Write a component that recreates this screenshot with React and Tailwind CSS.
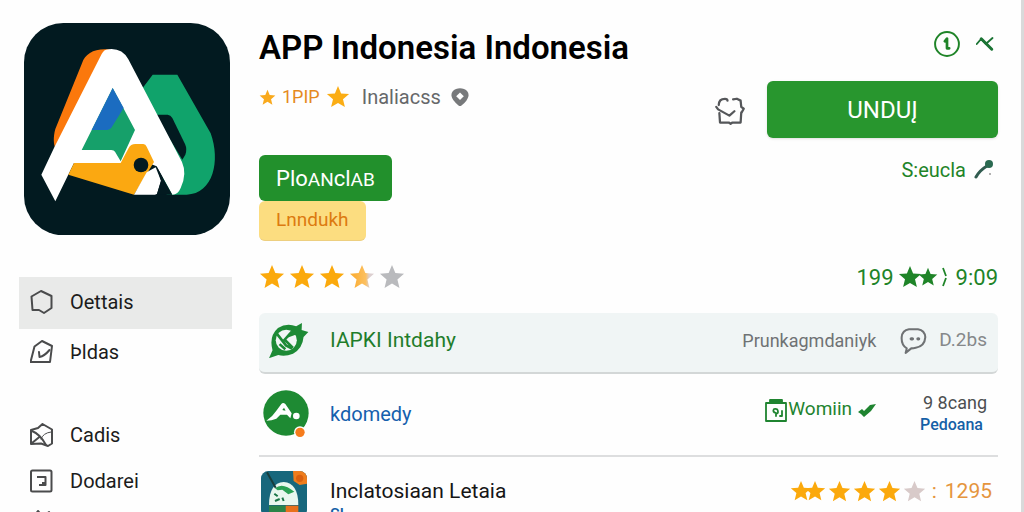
import React from "react";

const STAR = "M12 1l3.100 7.400 8 .7-6.100 5.200 1.900 7.800L12 18l-6.900 4.100 1.900-7.800L.9 9.100l8-.7z";

const Star = ({ className }) => (
  <svg viewBox="0 0 24 24" fill="currentColor" className={className} aria-hidden="true">
    <path d={STAR} />
  </svg>
);

// Star with only its left part filled
const HalfStar = ({ className }) => (
  <svg viewBox="0 0 24 24" className={className} aria-hidden="true">
    <defs>
      <linearGradient id="half">
        <stop offset="0.2" stopColor="#fbb03a" />
        <stop offset="0.65" stopColor="#fcc060" />
        <stop offset="0.8" stopColor="#dccfd0" />
      </linearGradient>
    </defs>
    <path d={STAR} fill="url(#half)" />
  </svg>
);

const AppLogo = () => (
  <svg viewBox="72 67 618 637" className="w-full" aria-hidden="true">
    <rect x="72" y="67" width="618" height="637" rx="118" fill="#021a20" />
    <path d="M428 262L458 222H532L632 398C662 480 640 580 560 582H500L440 300z" fill="#10a36b" />
    <path d="M465 342H503Q512 343 517 352L555 430Q562 445 556 462L547 477z" fill="#021a20" />
    <path d="M330 147C285 142 256 158 246 188L166 385C159 410 161 432 166 442L220 410z" fill="#fb780c" />
    <path
      d="M318 147Q364 138 385 176L546 484Q562 520 542 562Q534 582 517 582L470 497L400 470L365 487H222L166 602L124 522L163 440L300 170Q308 150 318 147z"
      fill="#fff"
    />
    <path d="M338 262L405 388L362 482L345 453Q342 448 334 448H245z" fill="#16a06a" />
    <path d="M338 262L371 322L335 380Q330 388 322 388H275z" fill="#1b6cc0" />
    <path d="M222 487H362L386 442Q392 430 406 430H430Q437 431 440 438L462 484L402 582L205 522z" fill="#fba811" />
    <path d="M440 515L467 500L483 540L472 578Q470 582 464 582H402z" fill="#fff" />
    <path d="M471 500L517 582H470L483 540z" fill="#021a20" />
    <circle cx="423" cy="493" r="22" fill="#021a20" />
  </svg>
);

const Icon = ({ children, className = "size-6", ...rest }) => (
  <svg
    viewBox="0 0 24 24"
    fill="none"
    stroke="currentColor"
    strokeWidth="1.8"
    strokeLinejoin="round"
    strokeLinecap="round"
    className={className}
    aria-hidden="true"
    {...rest}
  >
    {children}
  </svg>
);

const navTop = [
  {
    label: "Oettais",
    active: true,
    icon: <path d="M11 1L1.500 6.500 2.500 20H9l5 3 7.500-5V6z" />,
  },
  {
    label: "Þldas",
    icon: (
      <>
        <path d="M12 1L4.500 6.500 .5 22H20l2-16z" />
        <path d="M9 12l.5 5q5-1 10-7" />
      </>
    ),
  },
];

const navBottom = [
  {
    label: "Cadis",
    icon: (
      <>
        <path d="M12.500 1L8 5 1 7v14l10-.5 7 2.500 4-2.500V6.500z" />
        <path d="M2 8q8 3 14 14M2 20l8-6.500" />
        <path d="M21 9q-8 1-10 7" strokeWidth="1" />
      </>
    ),
  },
  {
    label: "Dodarei",
    icon: (
      <>
        <rect x="1" y="1.500" width="20.500" height="21" rx="1.500" />
        <path d="M7 8h8.500v8H9M12 14h3" strokeLinecap="butt" />
      </>
    ),
  },
];

const NavItem = ({ label, icon, active }) => (
  <a
    href="#"
    className={
      active
        ? "flex h-[52px] items-center gap-4 bg-[#e9eae9] px-[11px] pb-0.5 text-[#1c1c1c]"
        : "flex h-[46px] items-center gap-4 px-[11px] text-[#1c1c1c]"
    }
  >
    <Icon className="size-6 text-[#4a4b4c]" strokeWidth="2">{icon}</Icon>
    <span className="text-xl">{label}</span>
  </a>
);

const Sidebar = () => (
  <aside className="ml-[19px] w-[213px] shrink-0 pt-[23px]">
    <div className="pr-0.5 pl-[5px]">
      <AppLogo />
    </div>
    <nav className="mt-[42px]">
      {navTop.map((item) => (
        <NavItem key={item.label} {...item} />
      ))}
      <div className="mt-[37px]">
        {navBottom.map((item) => (
          <NavItem key={item.label} {...item} />
        ))}
      </div>
      <a href="#" aria-label="Menu" className="block px-[11px] pt-1.5">
        <Icon className="size-6 text-[#4a4b4c]" strokeWidth="2">
          <path d="M2 9l6-8 5 6 6-5 4 7v13H2z" />
        </Icon>
      </a>
    </nav>
  </aside>
);

const Header = () => (
  <header className="flex justify-between">
    <div>
      <h1 className="text-[33px] leading-10 font-semibold text-black">APP Indonesia Indonesia</h1>
      <div className="mt-[17px] flex h-6 items-center text-xl leading-6">
        <Star className="size-[17px] text-[#f9a91c]" />
        <span className="ml-1.5 text-lg text-[#e58a1e]">1PIP</span>
        <Star className="ml-1.5 size-6 text-[#fbad14]" />
        <span className="ml-3 text-[#66686a]">Inaliacss</span>
        <svg viewBox="0 0 18 18" className="ml-2.5 size-[18px]" aria-hidden="true">
          <path d="M5 1Q9-.5 13 1q5 2 4.500 7-1 5-7 9.500-1.500 1-3 0Q1 12 .5 8 0 3 5 1z" fill="#77797b" />
          <path d="M9 4.500l3.800 3.800L9 12.100 5.200 8.300z" fill="#fff" />
        </svg>
      </div>
      <div className="mt-[46px] flex flex-col items-start">
        <button className="h-[46px] rounded-md bg-[#22902c] px-[17px] text-[22px] text-white">
          Plo<span className="text-[19px]">AN</span>cl<span className="text-[19px]">AB</span>
        </button>
        <button className="h-10 rounded-md border-b border-[#edcf80] bg-[#fcdd80] px-[17px] text-[19px] text-[#dc7a10]">
          Lnndukh
        </button>
      </div>
      <div className="mt-6 flex h-6 items-center gap-1" role="img" aria-label="3.5">
        <Star className="size-[26px] text-[#fba90c]" />
        <Star className="size-[26px] text-[#fba90c]" />
        <Star className="size-[26px] text-[#fba90c]" />
        <HalfStar className="size-[26px]" />
        <Star className="size-[26px] text-[#b9babd]" />
      </div>
    </div>

    <div className="flex flex-col items-end text-[#1f8428]">
      <div className="flex h-8 items-center gap-4">
        <button aria-label="Info">
          <Icon className="size-[26px]">
            <circle cx="12" cy="12" r="11" />
            <path d="M10 9.500l2-2.500v9h2" strokeWidth="2.500" />
          </Icon>
        </button>
        <button aria-label="Bagikan" className="mr-1">
          <Icon className="size-[18px]" stroke="#1b7434">
            <path d="M1 12L7 5l6 7 9-8" strokeWidth="2.500" />
            <path d="M7 5l14 14" strokeWidth="4" />
          </Icon>
        </button>
      </div>
      <div className="mt-[21px] flex items-center gap-[22px]">
        <button aria-label="Simpan">
          <Icon className="size-[30px] text-[#55575a]">
            <path d="M3 8q0-5 5-5 2 0 2 1.500M14.500 3.500l3-.5 3 1.500.5 5 2 1.500-2 3.500M1 9.500l1.500 2 9 5 4-3.500M3.500 14.500L4 22h7l1.500 1 1.500-1h6.500l.5-8" />
          </Icon>
        </button>
        <button className="h-[57px] w-[231px] rounded-md bg-[#28962e] text-2xl text-white shadow-sm">
          UNDUĮ
        </button>
      </div>
      <a href="#" className="mt-5 flex h-6 items-center gap-2 text-xl">
        S:eucla
        <svg viewBox="0 0 20 20" className="mr-1 size-5" aria-hidden="true">
          <path d="M2 17Q6 10 13 6" stroke="#315c50" strokeWidth="3" strokeLinecap="round" fill="none" />
          <circle cx="15" cy="4" r="4" fill="#2b6a51" />
          <circle cx="16" cy="14" r="1" fill="#999" />
        </svg>
      </a>
      <div className="mt-auto flex h-6 items-center text-[22px]">
        <span>199</span>
        <Star className="ml-1 size-6" />
        <Star className="-ml-1 size-5" />
        <svg viewBox="0 0 6 20" className="ml-1 h-5 w-1.5" stroke="currentColor" strokeWidth="1.800" fill="none" aria-hidden="true">
          <path d="M1 1l3 8M4 11L1 19" />
        </svg>
        <span className="ml-2">9:09</span>
      </div>
    </div>
  </header>
);

const LeafIcon = () => (
  <svg viewBox="55 70 125 110" className="w-10" aria-hidden="true">
    <path
      d="M55 180L66 155Q54 112 83 86Q110 68 140 80L158 70L157 92L178 98L163 114Q160 150 130 166Q105 176 84 170z"
      fill="#1d8a35"
    />
    <ellipse cx="109" cy="124" rx="33" ry="33" fill="#f1f6f5" />
    <path d="M80 104L108 140L127 150M127 96L104 122L130 148M88 136L106 152" stroke="#1d8a35" strokeWidth="8" fill="none" />
    <path d="M132 90L108 118L140 106z" fill="#1d8a35" />
  </svg>
);

const RoundIcon = () => (
  <svg viewBox="38 272 138 142" className="w-[46px]" aria-hidden="true">
    <circle cx="107" cy="341" r="68" fill="#1e8a33" />
    <path d="M48 364Q68 350 78 334L93 314Q98 308 105 314L124 342L120 357L110 346H90L78 358Q64 364 48 364z" fill="#fff" />
    <path d="M96 332L101 325L106 334z" fill="#1e8a33" />
    <circle cx="138" cy="350" r="10" fill="#fff" />
    <circle cx="149" cy="399" r="18" fill="#fff" />
    <circle cx="149" cy="399" r="14" fill="#f67c1c" />
  </svg>
);

const TileIcon = () => (
  <svg viewBox="34 510 138 138" className="w-[46px]" aria-hidden="true">
    <clipPath id="tile">
      <rect x="34" y="510" width="138" height="138" rx="22" />
    </clipPath>
    <g clipPath="url(#tile)">
      <rect x="34" y="510" width="138" height="138" fill="#17677c" />
      <path d="M130 510H172V548L150 552L132 540z" fill="#ef7d1c" />
      <circle cx="150" cy="532" r="11" fill="#d9600f" />
      <path d="M58 612Q58 546 102 543Q146 546 146 612z" fill="#e9f7ef" />
      <path d="M76 562Q98 542 134 572L116 580L98 566L84 568z" fill="#2ba155" />
      <path d="M52 514L78 560" stroke="#173c3b" strokeWidth="6" />
      <path d="M74 578L84 586M76 600L90 594M98 590L102 600" stroke="#1b7548" strokeWidth="6" />
      <rect x="58" y="614" width="50" height="34" fill="#2a8448" />
      <rect x="108" y="614" width="38" height="34" fill="#e8701b" />
    </g>
  </svg>
);

const AppList = () => (
  <section className="mt-6 text-xl">
    <article className="flex h-[61px] items-center rounded-md border-b-2 border-[#d3d7d7] bg-[#f0f5f5] pr-[11px] pb-1 pl-2.5">
      <LeafIcon />
      <a href="#" className="ml-[21px] text-[21px] text-[#1f7d2b]">IAPKI Intdahy</a>
      <span className="ml-auto text-lg text-[#6f7274]">Prunkagmdaniyk</span>
      <Icon className="ml-6 size-[27px] text-[#6f7274]">
        <path d="M6 19Q1 16 1.500 9 2 3 8 2h8q6 1 6.500 7-.5 8-8.500 9.500-2 .5-4 .5l-5 4z" />
        <path d="M10 10.500h1M16 10.500h.5" strokeWidth="3" />
      </Icon>
      <span className="ml-3 text-[19px] text-[#85888a]">D.2bs</span>
    </article>

    <article className="flex h-[83px] items-center border-b-2 border-[#dddedf] pr-[11px] pb-0.5 pl-1">
      <RoundIcon />
      <a href="#" className="ml-[21px] text-[#1560ad]">kdomedy</a>
      <div className="mb-2 ml-auto flex items-center text-[#1f8430]">
        <Icon className="size-6">
          <path d="M2 5h20v18H2z" />
          <path d="M6 2h12v3H6z" fill="currentColor" />
          <path d="M12 18v-3q-4-1-2-4 4-1 4 3 0 2-2 1M18 13v5h-2" />
        </Icon>
        <span className="text-[19px]">Womiin</span>
        <svg viewBox="0 0 18 14" className="ml-1.5 w-[18px]" fill="currentColor" aria-hidden="true">
          <path d="M0 9l4-3 2 2 6-6 6-1-5 7-7 6-3-3z" />
        </svg>
      </div>
      <div className="ml-11 flex flex-col items-end text-lg leading-[22px]">
        <span className="text-[#4c4e50]">9 8cang</span>
        <a href="#" className="mr-1 text-base leading-[22px] font-medium text-[#1560a6]">Pedoana</a>
      </div>
    </article>

    <article className="flex items-start pt-3.5 pr-1.5 pl-0.5">
      <TileIcon />
      <div className="ml-[23px] flex flex-col pt-1.5">
        <span className="text-[21px] leading-7 text-[#161616]">Inclatosiaan Letaia</span>
        <a href="#" className="text-base leading-5 font-medium text-[#1560a6]">Sl.</a>
      </div>
      <div className="ml-auto flex items-center pt-2 text-[21px] leading-6 text-[#e5953d]">
        <Star className="size-[22px] text-[#fba90c]" />
        <Star className="-ml-2 size-[22px] text-[#fba90c]" />
        <Star className="ml-0.5 size-[23px] text-[#fba90c]" />
        <Star className="ml-0.5 size-[23px] text-[#fba90c]" />
        <Star className="ml-0.5 size-[23px] text-[#fba90c]" />
        <Star className="ml-0.5 size-[23px] text-[#d8cac9]" />
        <span className="ml-1.5">:</span>
        <span className="ml-2">1295</span>
      </div>
    </article>
  </section>
);

export default function App() {
  return (
    <div className="flex h-screen overflow-hidden border-r-3 border-[#d9dada] bg-[#fefefe] font-[Roboto,sans-serif]">
      <Sidebar />
      <main className="ml-[27px] min-w-0 flex-1 pt-7 pr-[23px]">
        <Header />
        <AppList />
      </main>
    </div>
  );
}
